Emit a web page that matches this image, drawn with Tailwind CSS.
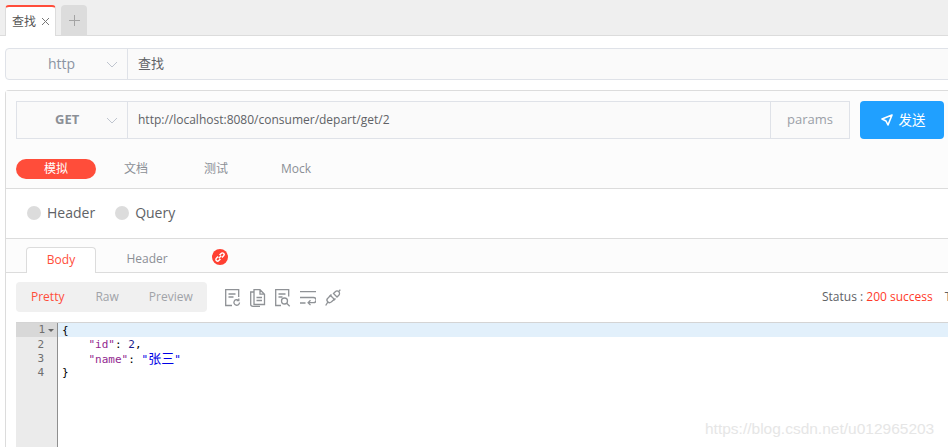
<!DOCTYPE html>
<html lang="zh">
<head>
  <meta charset="UTF-8" />
  <title>查找</title>
  <script src="https://cdn.jsdelivr.net/npm/@tailwindcss/browser@4"></script>
</head>
<body class="relative w-[948px] h-[447px] overflow-hidden bg-white font-['Open_Sans','Noto_Sans_CJK_SC',sans-serif] text-[#606266]">
  <!-- tabs -->
  <header class="flex items-end h-9 pl-[5px] gap-[5px] bg-[#efefef] border-b border-[#dcdcdc]">
    <div class="flex items-center gap-[5px] w-[51px] h-[31px] pl-[6px] -mb-px bg-white border-t-2 border-x border-t-[#ff4d3a] border-x-[#dcdcdc] rounded-t text-xs text-[#555]">
      <span>查找</span>
      <svg class="w-[9px] h-[9px] text-[#777]" viewBox="0 0 9 9" fill="none" stroke="currentColor"><path d="M1 1l7 7M8 1l-7 7"/></svg>
    </div>
    <div class="flex items-center justify-center w-[26px] h-[30px] bg-[#dcdcdc] rounded-t">
      <svg class="w-[11px] h-[11px] text-[#a3a3a3]" viewBox="0 0 11 11" fill="none" stroke="currentColor"><path d="M5.5 0v11M0 5.5h11"/></svg>
    </div>
  </header>

  <!-- name -->
  <div class="flex w-[960px] h-8 mt-3 ml-[5px] bg-[#fafafa] border border-[#dfe2e8] rounded">
    <div class="flex items-center w-[122px] shrink-0 border-r border-[#dfe2e8]">
      <span class="ml-[42px] text-sm text-[#8b94a3]">http</span>
      <svg class="ml-[31px] w-3 h-[7px] text-[#bfc5cf]" viewBox="0 0 12 7" fill="none" stroke="currentColor"><path d="M1 1l5 5 5-5"/></svg>
    </div>
    <div class="flex items-center pl-[10px] text-[13px] text-[#606266]">查找</div>
  </div>

  <!-- request panel -->
  <main class="w-[960px] mt-[10px] ml-[5px] border-l border-t border-[#dcdcdc] rounded-tl">
    <section class="h-[98px] bg-[#fcfcfc] border-b border-[#dcdcdc] pl-[10px] pt-[10px]">
      <div class="flex">
        <div class="flex w-[834px] h-[38px] border border-[#dfe2e8] bg-[#fafafa]">
          <div class="flex items-center w-[111px] shrink-0 border-r border-[#dfe2e8]">
            <span class="ml-[38px] text-[13px] font-bold text-[#8b8f96]">GET</span>
            <svg class="ml-[27px] w-3 h-[7px] text-[#bfc5cf]" viewBox="0 0 12 7" fill="none" stroke="currentColor"><path d="M1 1l5 5 5-5"/></svg>
          </div>
          <div class="flex-1 flex items-center pl-[10px] text-xs text-[#606266]">http://localhost:8080/consumer/depart/get/2</div>
          <div class="flex items-center justify-center w-[79px] shrink-0 border-l border-[#dfe2e8] text-[13px] text-[#9a9fa8]">params</div>
        </div>
        <button class="flex items-center justify-center gap-[6px] w-[84px] h-[38px] ml-[10px] pl-[2px] bg-[#20a0ff] rounded text-white text-[13.5px]">
          <svg class="w-[12px] h-[12px]" viewBox="0 0 12 12" fill="none" stroke="currentColor" stroke-width="1.6" stroke-linejoin="round"><path d="M11 1L1 5l4 2 2 4z"/></svg>
          <span>发送</span>
        </button>
      </div>
      <nav class="flex items-center h-5 mt-5 text-xs text-[#8b8f96]">
        <span class="flex items-center justify-center w-20 h-5 bg-[#ff4d3a] rounded-full text-white">模拟</span>
        <span class="w-20 text-center">文档</span>
        <span class="w-20 text-center">测试</span>
        <span class="w-20 text-center">Mock</span>
      </nav>
    </section>

    <section class="flex items-center h-[50px] pb-[2px] bg-white border-b border-[#dcdcdc] pl-[21px] text-sm text-[#606266]">
      <span class="w-[14px] h-[14px] rounded-full bg-[#dcdcdc]"></span>
      <span class="ml-[6px]">Header</span>
      <span class="w-[14px] h-[14px] ml-[20px] rounded-full bg-[#dcdcdc]"></span>
      <span class="ml-[6px]">Query</span>
    </section>

    <section class="flex items-end h-[34px] bg-[#fcfcfc] border-b border-[#dcdcdc] pl-5 text-xs">
      <div class="flex items-center justify-center w-[70px] h-[26px] pb-[2px] -mb-px bg-white border-x border-t border-[#dcdcdc] rounded-t text-[#ff4d3a]">Body</div>
      <div class="flex items-center justify-center w-[102px] h-[26px] text-[#8b8f96]">Header</div>
      <div class="flex items-center justify-center w-4 h-4 mb-[7px] ml-[14px] rounded-full bg-[#ff4032]">
        <svg class="w-3 h-3 text-white" viewBox="0 0 10 10" fill="none" stroke="currentColor" stroke-width="1.2"><path d="M4 6l2-2M3.4 4.6L2 6a1.4 1.4 0 0 0 2 2l1.4-1.4M4.6 3.4L6 2a1.4 1.4 0 0 1 2 2L6.6 5.4"/></svg>
      </div>
    </section>

    <!-- response toolbar -->
    <section class="flex items-center h-[49px] pb-px pl-[10px] bg-white">
      <div class="flex items-center shrink-0 w-[191px] h-[30px] bg-[#f0f0f0] rounded text-xs text-[#a0a3a8]">
        <span class="ml-[15px] text-[#ff4d3a]">Pretty</span>
        <span class="ml-[31px]">Raw</span>
        <span class="ml-[30px]">Preview</span>
      </div>
      <div class="flex items-center shrink-0 gap-[9px] ml-[18px] mt-px text-[#8f9296]">
        <svg class="w-4 h-[18px]" viewBox="0 0 16 18" fill="none" stroke="currentColor" stroke-width="1.3"><path d="M7 16.500H0.700V0.700h13V8M3.500 5h7M3.500 8h5"/><path d="M14.500 13.500a2.800 2.800 0 1 1-1-2.200"/><path d="M13.800 9.500v2.200h-2.200"/></svg>
        <svg class="w-4 h-[18px]" viewBox="0 0 16 18" fill="none" stroke="currentColor" stroke-width="1.3"><path d="M4 0.700h6l4.500 4.500v10.300H4zM10 0.700V5.200h4.500M6.500 8.500h5.500M6.500 11.500h5.500"/><path d="M4 3H0.700v12.500Q0.700 17.300 3 17.300h7"/></svg>
        <svg class="w-4 h-[18px]" viewBox="0 0 16 18" fill="none" stroke="currentColor" stroke-width="1.3"><path d="M6 16.500H0.700V0.700h13V7.500M3.500 5h7M3.500 8h4"/><circle cx="9.500" cy="12" r="3"/><path d="M11.700 14.200l3 3"/></svg>
        <svg class="w-4 h-[18px]" viewBox="0 0 16 18" fill="none" stroke="currentColor" stroke-width="1.3"><path d="M0 2.700h16M0 8.500h13.500a2.600 2.600 0 0 1 0 5.200H8.500M10.500 11.300l-2.400 2.400 2.400 2.400M0 14h5.500"/></svg>
        <svg class="w-4 h-[18px]" viewBox="0 0 16 18" fill="none" stroke="currentColor" stroke-width="1.3"><path d="M8.500 4.500l1.800-1.800a2.300 2.300 0 0 1 3.500 3.500L12 8zM8.500 4.500L12 8M7.500 8.500L5.500 6.500 2.800 9.200a2.500 2.500 0 0 0 3.500 3.700l3-2.700-1.800-1.700zM2.800 13.200L0.700 16.500M13.800 2.700l1.500-2"/><path d="M4.500 7.500l2-2M8.500 11.500l2-2"/></svg>
      </div>
      <div class="ml-[481px] shrink-0 text-xs text-[#606266] whitespace-nowrap">Status : <span class="text-[#ff3a2a]">200 success</span><span class="ml-3">Time</span></div>
    </section>

    <!-- response body -->
    <section class="flex ml-[10px] h-[125px] border-t border-[#d4d4d4] font-['DejaVu_Sans_Mono','Noto_Sans_CJK_SC',monospace] text-[11px] leading-[16px]">
      <div class="w-[42px] shrink-0 bg-[#ebebeb] border-r border-[#8f8f8f] text-[#6f6f6f]">
        <div class="flex items-center justify-end h-[14px] pr-[3px] bg-[#d8d8d8]"><span>1</span><span class="ml-[3px] w-0 h-0 border-x-[3px] border-t-[3px] border-x-transparent border-t-[#666]"></span></div>
        <div class="h-[14px] pr-[13px] text-right">2</div>
        <div class="h-[14px] pr-[13px] text-right">3</div>
        <div class="h-[14px] pr-[13px] text-right">4</div>
      </div>
      <pre class="flex-1 font-[inherit] text-black"><div class="h-[14px] pl-[4px] bg-[#e2f0fb]">{</div><div class="h-[14px] pl-[4px]">    <span class="text-[#92278f]">"id"</span>: <span class="text-[#1c1c8c]">2</span>,</div><div class="h-[14px] pl-[4px]">    <span class="text-[#92278f]">"name"</span>: <span class="text-[#0000e6]">"<span class="text-[13px]">张三</span>"</span></div><div class="h-[14px] pl-[4px]">}</div></pre>
    </section>
  </main>

  <span class="absolute left-[705px] top-[417px] font-['Liberation_Sans',sans-serif] text-[15.5px] text-[#e6e6e6]">https://blog.csdn.net/u012965203</span>
</body>
</html>
